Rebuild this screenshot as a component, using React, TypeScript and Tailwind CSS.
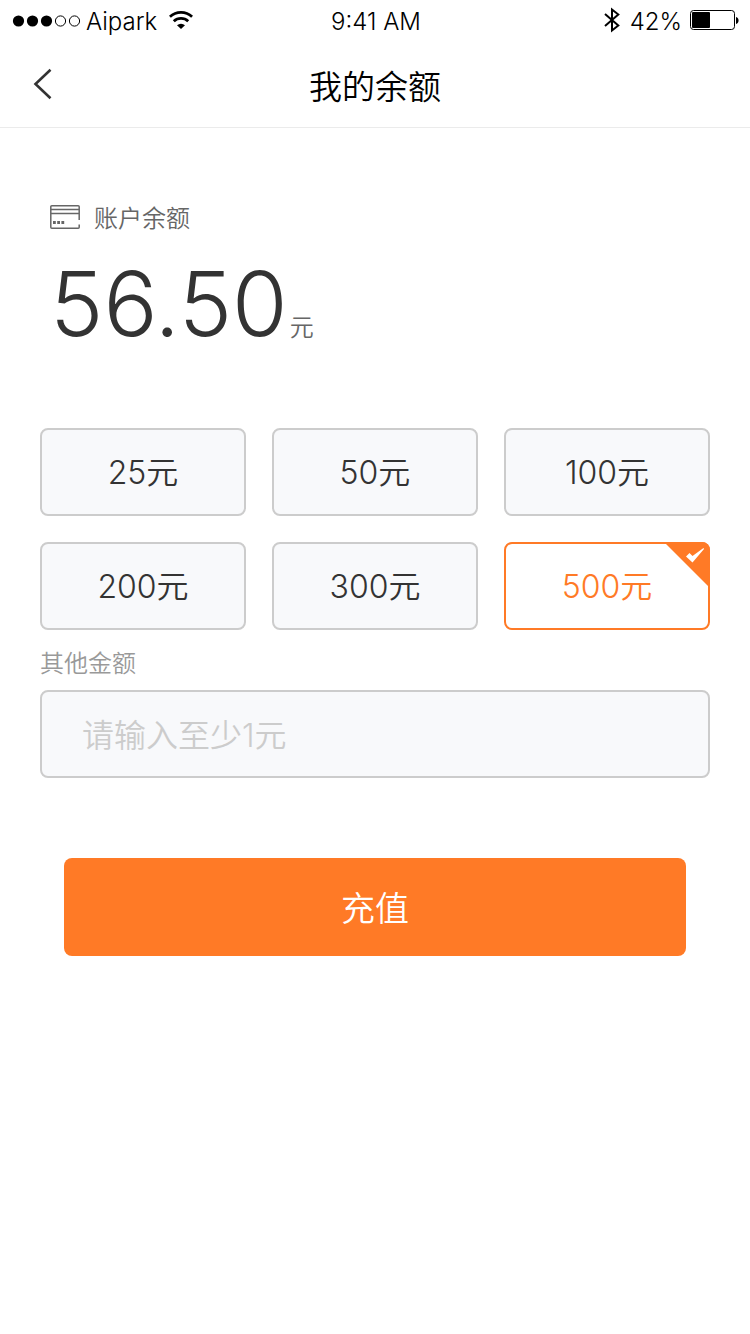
import { useState } from "react";

const amounts = [25, 50, 100, 200, 300, 500];

function StatusBar() {
  return (
    <div className="grid h-10 grid-cols-[1fr_auto_1fr] items-center pt-1 pr-2.5 pl-3 text-2xl leading-8 text-black">
      <div className="flex items-center">
        <svg className="mb-0.5 h-3 w-17" viewBox="0 0 68 12" aria-hidden="true">
          <circle cx="6.5" cy="6" r="5.6" />
          <circle cx="20.5" cy="6" r="5.6" />
          <circle cx="34.5" cy="6" r="5.6" />
          <circle cx="48.5" cy="6" r="5.1" fill="none" stroke="#000" />
          <circle cx="62.5" cy="6" r="5.1" fill="none" stroke="#000" />
        </svg>
        <span className="ml-1.5">Aipark</span>
        <svg className="mb-1 ml-3 h-5 w-6" viewBox="0 0 24 20" fill="none" stroke="#000" aria-hidden="true">
          <path d="M.9 6.800a16 16 0 0 1 22.200 0" strokeWidth="2.800" />
          <path d="M4.800 11.300a10.500 10.500 0 0 1 14.400 0" strokeWidth="2.800" />
          <path d="M8 15.200a6 6 0 0 1 8 0L12 19z" fill="#000" stroke="none" />
        </svg>
      </div>
      <span>9:41 AM</span>
      <div className="flex items-center justify-end">
        <svg className="mb-1 h-6.5 w-4" viewBox="0 0 16 26" fill="none" stroke="#000" strokeWidth="2" aria-hidden="true">
          <path d="M1 7 14.300 18.500 8 23.500v-21L14.300 7.500 1 19" />
        </svg>
        <span className="ml-2.5">42%</span>
        <svg className="mb-1 ml-2 h-5 w-12.5" viewBox="0 0 50 20" aria-hidden="true">
          <rect x="0.5" y="0.5" width="44" height="19" rx="3" fill="none" stroke="#000" />
          <rect x="2" y="2" width="18" height="16" rx="1" />
          <path d="M46 7c3.400.600 3.400 6.400 0 7z" />
        </svg>
      </div>
    </div>
  );
}

function CardIcon() {
  return (
    <svg className="mb-0.5 h-6 w-7.5" viewBox="0 0 30 24" fill="none" stroke="#666" strokeWidth="1.500" aria-hidden="true">
      <path d="M29.200 15V1.800a1 1 0 0 0-1-1H1.800a1 1 0 0 0-1 1v20.400a1 1 0 0 0 1 1h26.400a1 1 0 0 0 1-1V19.500M1 4.500h28M1 8.500h28" />
      <path d="M3 17.500h2.800M7.200 17.500h2.800M11.400 17.500h2.800" strokeWidth="2.800" />
    </svg>
  );
}

export default function App() {
  const [selected, setSelected] = useState(500);
  const [custom, setCustom] = useState("");

  return (
    <div className="min-h-screen bg-white font-['Inter','Noto_Sans_CJK_SC',sans-serif] font-[350] text-[#333]">
      <StatusBar />
      <header className="grid h-22 grid-cols-[1fr_auto_1fr] items-center border-b border-[#ebebeb] px-8">
        <button type="button" aria-label="返回" className="flex h-11 w-11 items-center">
          <svg className="h-8 w-5" viewBox="0 0 20 32" fill="none" stroke="#333" strokeWidth="2.600" aria-hidden="true">
            <path d="M18.500 1.800 3.500 16l15 14.200" />
          </svg>
        </button>
        <h1 className="pt-1.5 text-[33px] leading-10 font-[350] text-black">我的余额</h1>
      </header>

      <main className="px-10 pt-18">
        <section className="px-2.5">
          <h2 className="flex h-9 items-center gap-3.5 text-2xl font-[350] text-[#666]">
            <CardIcon />
            <span className="pt-0.5 leading-9">账户余额</span>
          </h2>
          <p className="flex items-baseline gap-0.5">
            <span className="text-[90px] leading-34">56.50</span>
            <span className="text-2xl text-[#666]">元</span>
          </p>
        </section>

        <div className="mt-14 grid grid-cols-3 gap-6.5" role="group" aria-label="充值金额">
          {amounts.map((amount) => (
            <button
              key={amount}
              type="button"
              aria-pressed={amount === selected}
              onClick={() => setSelected(amount)}
              className={
                amount === selected
                  ? "relative h-22 rounded-lg border-2 border-[#ff7a26] bg-white pt-0.5 text-[32px] leading-10 text-[#ff7a26]"
                  : "relative h-22 rounded-lg border-2 border-[#ccc] bg-[#f8f9fb] pt-0.5 text-[32px] leading-10"
              }
            >
              {amount}元
              {amount === selected && (
                <svg className="absolute -top-0.5 -right-0.5 h-11.5 w-11.5" viewBox="0 0 46 46" aria-hidden="true">
                  <path d="M0 0h38a8 8 0 0 1 8 8v38z" fill="#ff7a26" />
                  <path d="m22 14.500 3.500-3.500 3 3L39.500 6l.5 1L28.500 20.500z" fill="#fff" />
                </svg>
              )}
            </button>
          ))}
        </div>

        <label htmlFor="custom-amount" className="mt-4 block text-2xl leading-9 text-[#999]">
          其他金额
        </label>
        <input
          id="custom-amount"
          type="text"
          inputMode="decimal"
          value={custom}
          onChange={(event) => setCustom(event.target.value)}
          placeholder="请输入至少1元"
          className="mt-2 h-22 w-full rounded-lg border-2 border-[#ccc] bg-[#f8f9fb] px-10 pt-0.5 text-[32px] outline-none placeholder:text-[#ccc]"
        />

        <div className="px-6 pt-20">
          <button type="button" className="h-24.5 w-full rounded-lg bg-[#ff7a26] pt-1 text-[34px] leading-10 text-white">
            充值
          </button>
        </div>
      </main>
    </div>
  );
}
